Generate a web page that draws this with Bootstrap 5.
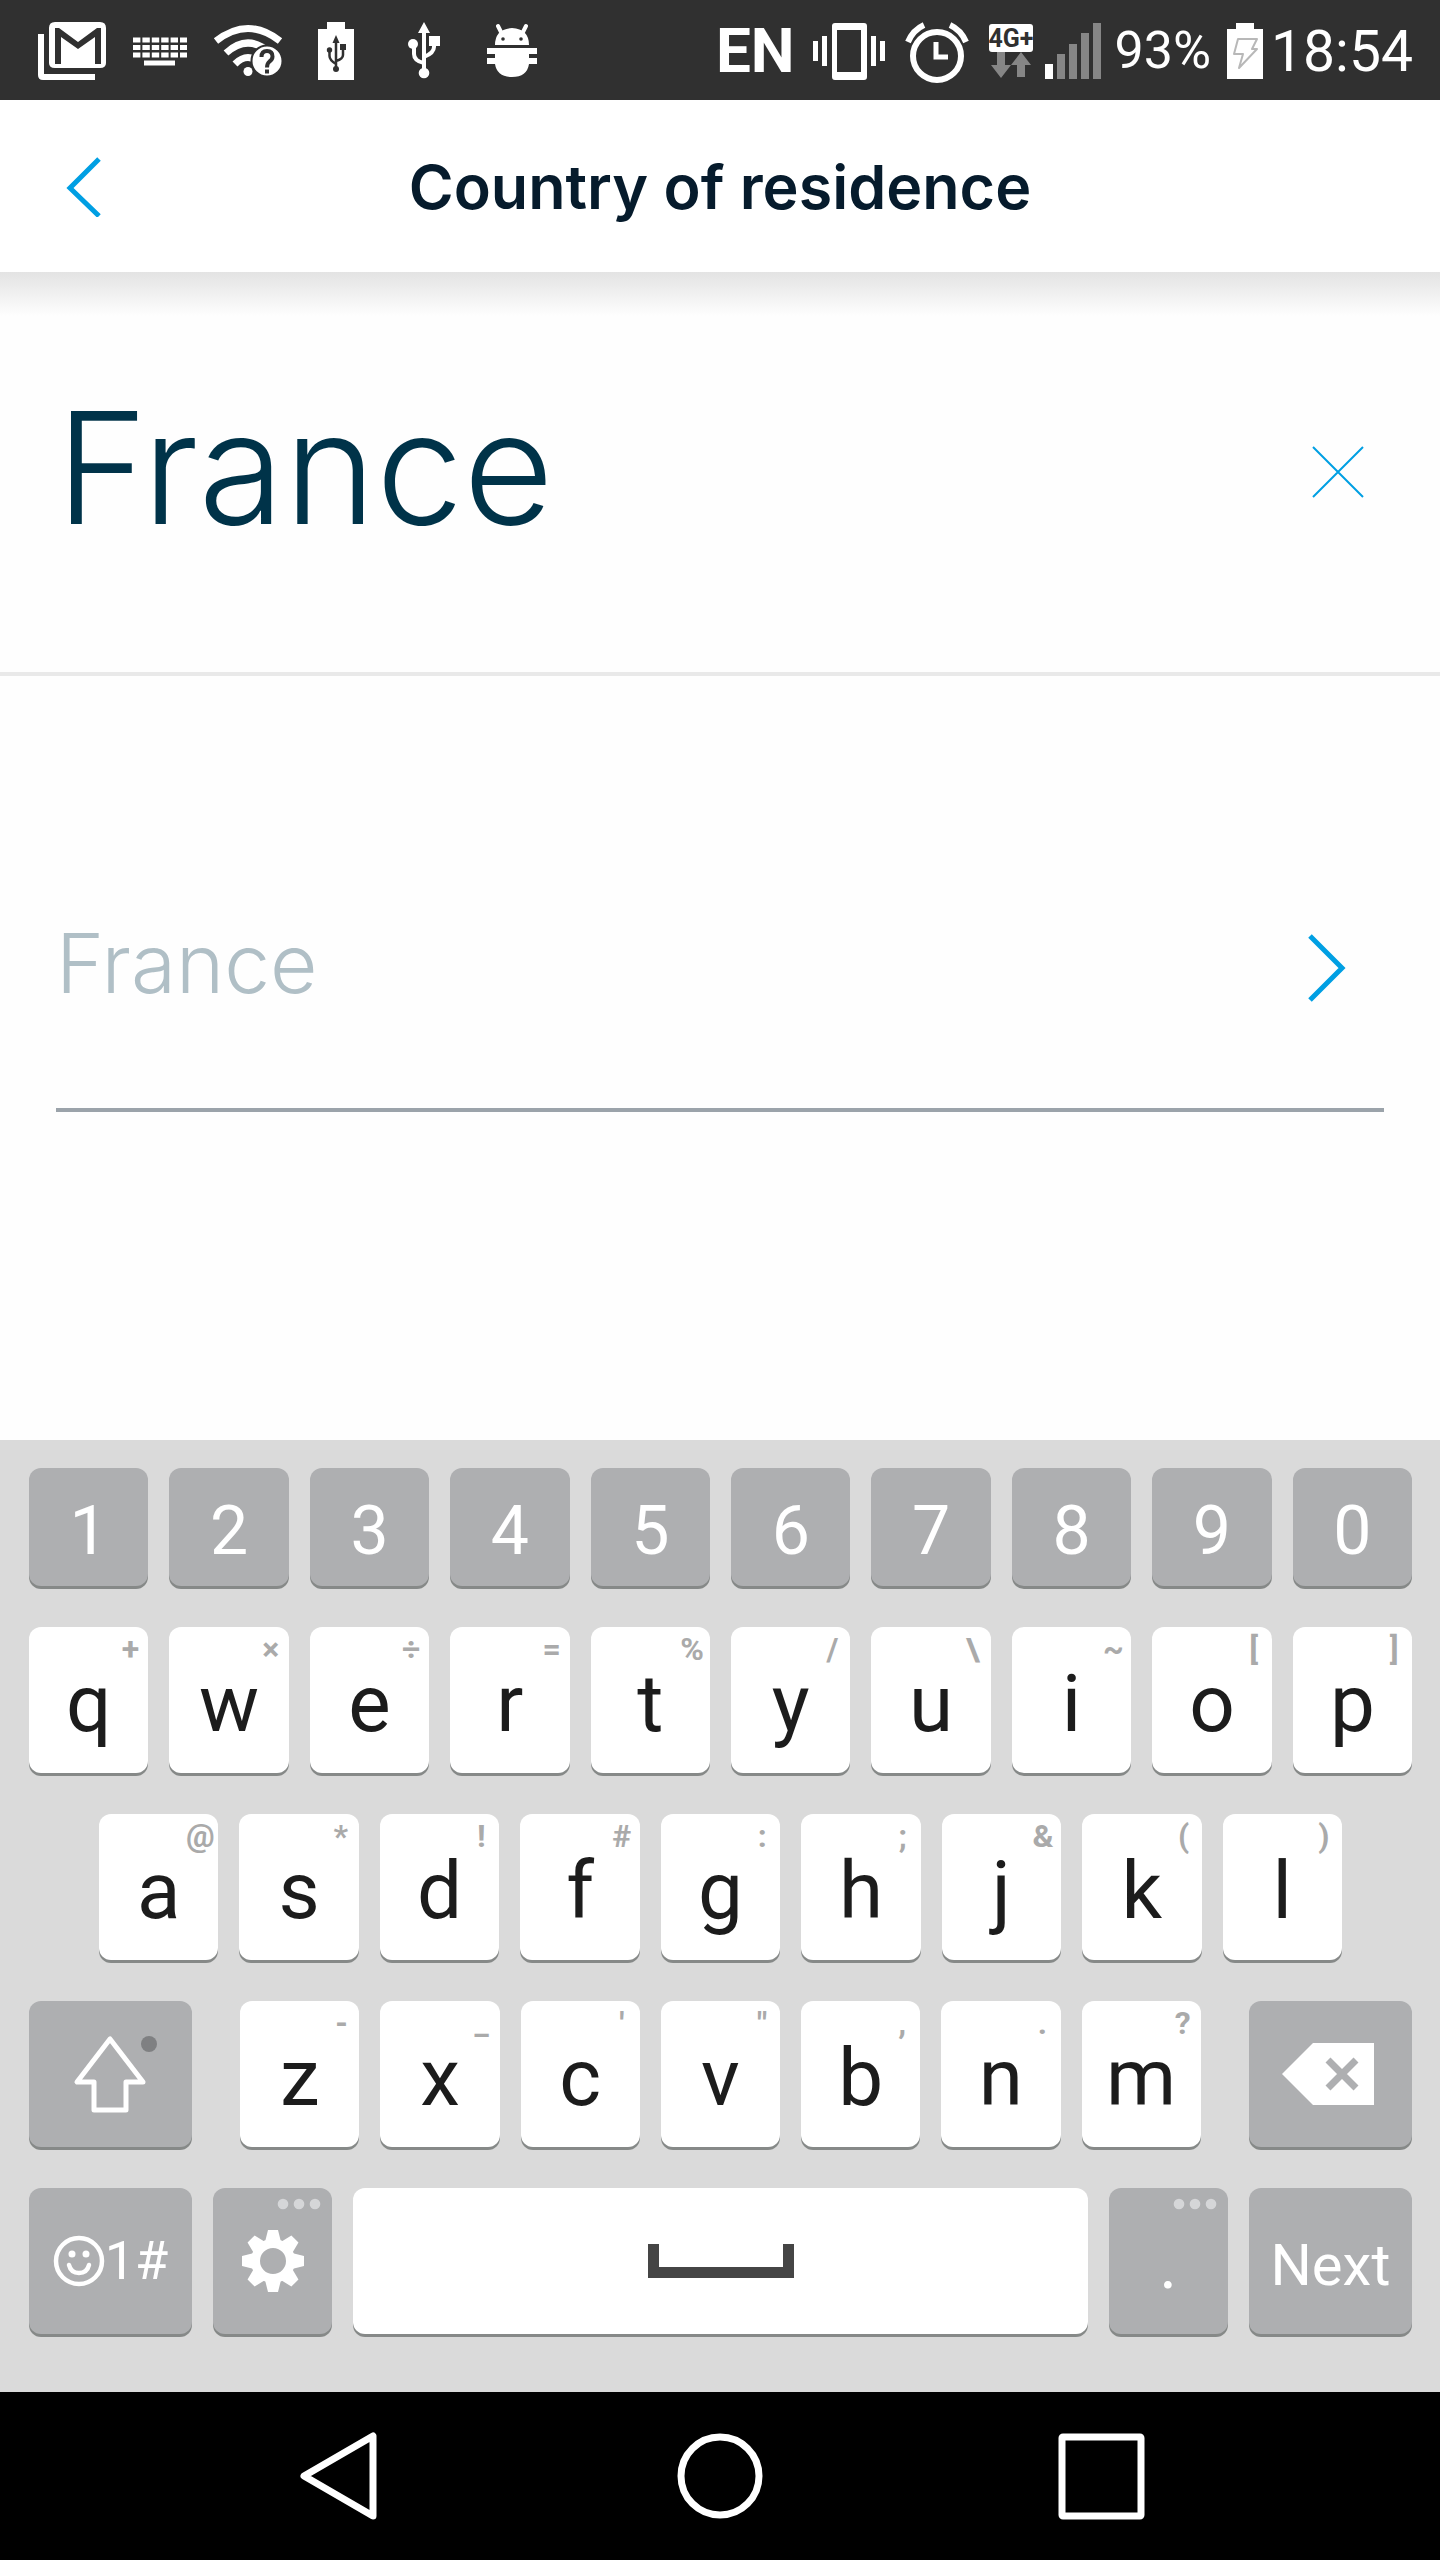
<!DOCTYPE html>
<html lang="en">
<head>
<meta charset="utf-8">
<meta name="viewport" content="width=device-width, initial-scale=1">
<title>Country of residence</title>
<link href="https://cdn.jsdelivr.net/npm/bootstrap@5.3.0/dist/css/bootstrap.min.css" rel="stylesheet">
<style>
  body { font-family: Roboto, "Noto Sans", sans-serif; background: #fefefe; }
  button { font-family: inherit; }
  svg { display: block; flex: none; }

  .status-bar { height: 100px; padding: 2px 27px 0 36px; background: #303030; color: #fff; line-height: 1; }
  .status-left { gap: 16px; }
  .status-right { gap: 8px; }
  .status-lang { font-size: 62px; font-weight: 700; }
  .status-pct { font-size: 52px; }
  .status-time { font-size: 57px; }

  .app-header { display: grid; grid-template-columns: 1fr auto 1fr; align-items: center; height: 172px; padding: 2px 56px 0; background: #fff; }
  .app-title { font-family: Inter, sans-serif; font-size: 61px; font-weight: 600; line-height: 80px; color: #061b2c; }
  .icon-btn { padding: 0; border: 0; background: none; }

  .search-area { height: 404px; padding: 0 56px; border-bottom: 4px solid #e9e9e9; background: linear-gradient(#e3e3e3, #fefefe 44px); }
  .search-box { min-width: 0; padding: 0 0 8px; border: 0; outline: 0; background: none; font-family: Inter, sans-serif; font-weight: 300; font-size: 156px; line-height: 208px; color: #003349; }

  .results { padding: 152px 56px 0; }
  .result-link { height: 284px; border-bottom: 4px solid #9ba3aa; color: #b0bfc6; text-decoration: none; font-family: Inter, sans-serif; font-weight: 300; font-size: 82px; line-height: 100px; }
  .result-link span { padding-bottom: 8px; }

  .keyboard { padding: 28px 28px 58px 29px; gap: 41px; background: #dadada; }
  .key-row { gap: 21px; }
  .key-row-inset { padding: 0 70px; }
  .key { position: relative; display: flex; align-items: center; justify-content: center; flex: 119 1 0; min-width: 0; height: 146px; padding: 8px 0 0; border: 0; border-radius: 12px; background: #fff; box-shadow: 0 3px 0 #868988; color: #1c1c1c; font-size: 80px; line-height: 1; }
  .key-num { height: 118px; font-size: 68px; }
  .key-gray { background: #aeafb1; color: #fff; }
  .key-wide { flex-grow: 163; font-size: 58px; }
  .key-shift { margin-right: 27px; }
  .key-back { margin-left: 27px; }
  .key-space { flex-grow: 734; }
  .key-dot { font-size: 68px; }
  .key-icon { padding-top: 0; }
  .key-symbols { font-size: 54px; }
  .key-hint { position: absolute; top: 0; right: 0; width: 36px; text-align: center; font-size: 32px; font-weight: 700; line-height: 44px; color: #aaa; }
  .key-more { position: absolute; top: 10px; right: 11px; }

  .nav-keys { height: 168px; gap: 293px; background: #000; }
</style>
</head>
<body class="d-flex flex-column min-vh-100">

<div class="status-bar d-flex align-items-center justify-content-between">
  <div class="status-left d-flex align-items-center">
    <svg width="72" height="60" viewBox="0 0 72 60" fill="#fff" aria-label="Mail"><path d="M2 13h6v40h51v6H7q-5 0-5-5z"/><path fill-rule="evenodd" d="M19 1h45q6 0 6 6v35q0 5-6 5H19q-6 0-6-5V7q0-6 6-6zM19 7v36h6V16l17 12 17-12v27h6V7h-4L42 21 23 7z"/></svg>
    <svg width="72" height="60" viewBox="0 0 72 60" aria-label="Keyboard"><path d="M9 19h54M9 26.500h54M9 34h54" stroke="#fff" stroke-width="5" stroke-dasharray="7.400 2"/><path d="M20 42h31" stroke="#fff" stroke-width="5"/></svg>
    <svg width="72" height="60" viewBox="0 0 72 60" aria-label="Wi-Fi"><g fill="none" stroke="#fff" stroke-width="7"><path d="M4 20Q36-5 68 20"/><path d="M14 32Q36 12 58 32"/><path d="M23 43Q36 30 49 43"/></g><circle cx="36" cy="50.500" r="4.500" fill="#fff"/><circle cx="55" cy="40" r="15.500" fill="#fff" stroke="#303030" stroke-width="2"/><path d="M49.500 36q0-6 5.500-6t5.500 5.500q0 3-3 5-2.500 2-2.500 6" fill="none" stroke="#303030" stroke-width="4"/><path d="M53 48.500h4v4h-4z" fill="#303030"/></svg>
    <svg width="72" height="60" viewBox="0 0 72 60" aria-label="USB charging"><path fill="#fff" d="M18 8h9V1h18v7h9v51H18z"/><g fill="none" stroke="#303030" stroke-width="2.500"><path d="M36 20v30M29.500 30v5q0 4 6.500 8M43 26v8q0 4-7 6"/></g><path fill="#303030" d="M36 14l3.500 8h-7zM40 23h6v6h-6z"/><circle cx="29.500" cy="29" r="2.700" fill="#303030"/><circle cx="36" cy="48" r="3" fill="#303030"/></svg>
    <svg width="72" height="60" viewBox="0 0 72 60" aria-label="USB"><g fill="none" stroke="#fff" stroke-width="4"><path d="M36 10v45M26 24v9q0 7 10 9M46 16v10q0 6-10 10"/></g><path fill="#fff" d="M36 1l6 11H30zM41 15h11v10H41z"/><circle cx="25" cy="23" r="5" fill="#fff"/><circle cx="36" cy="52" r="5.300" fill="#fff"/></svg>
    <svg width="72" height="60" viewBox="0 0 72 60" aria-label="Debugging"><path d="M22 5l4 8M50 5l-4 8" stroke="#fff" stroke-width="4" stroke-linecap="round"/><path fill="#fff" d="M19 24q0-16 17-17 17 1 17 17zM11 27h50v6h-8v4h8v6h-8q-2 13-17 13T19 43h-8v-6h8v-4h-8z"/><circle cx="27" cy="18" r="1.800" fill="#303030"/><circle cx="45" cy="18" r="1.800" fill="#303030"/></svg>
  </div>
  <div class="status-right d-flex align-items-center">
    <span class="status-lang me-2">EN</span>
    <svg width="84" height="60" viewBox="0 0 84 60" fill="#fff" aria-label="Vibrate"><path fill-rule="evenodd" d="M24 2h29q3 0 3 3v51q0 3-3 3H24q-3 0-3-3V5q0-3 3-3zM26 9v42h24V9zM2 20h5v20H2zM11 15h5v30h-5zM60 15h5v30h-5zM69 20h5v20h-5z"/></svg>
    <svg width="76" height="64" viewBox="0 0 76 64" fill="none" stroke="#fff" aria-label="Alarm"><circle cx="34" cy="37" r="24" stroke-width="6"/><path d="M33 23v15h12" stroke-width="5"/><path d="M5 23Q10 11 21 6M63 23Q58 11 47 6" stroke-width="6"/></svg>
    <svg width="46" height="60" viewBox="0 0 46 60" aria-label="4G+"><rect x="2" y="3" width="44" height="28" rx="3" fill="#fff"/><text x="24" y="26" text-anchor="middle" font-family="Roboto" font-weight="700" font-size="25" fill="#303030">4G+</text><path fill="#868686" d="M10 31h8v13h6L14 57 4 44h6zM34 31l10 13h-6v12h-8V44h-6z"/></svg>
    <svg width="66" height="60" viewBox="0 0 66 60" aria-label="Signal"><path fill="#fff" d="M4 43h8v15H4z"/><path fill="#868686" d="M16 33h8v25h-8zM28 23h8v35h-8zM40 12h8v46h-8zM52 2h8v56h-8z"/></svg>
    <span class="status-pct">93%</span>
    <svg width="44" height="60" viewBox="0 0 44 60" aria-label="Battery"><path fill="#fff" d="M8 8h9V2h18v6h9v50H8z"/><path fill="none" stroke="#b8b8b8" stroke-width="2" stroke-linejoin="round" d="M19 18h19l-5 10h5L20 47l4-14h-9z"/></svg>
    <span class="status-time">18:54</span>
  </div>
</div>

<header class="app-header">
  <button class="icon-btn text-start" type="button" aria-label="Back"><svg width="56" height="60" viewBox="0 0 56 60" fill="none" stroke="#009fe3" stroke-width="5"><path d="M43 2L14 31l29 28"/></svg></button>
  <h1 class="app-title m-0">Country of residence</h1>
</header>

<main class="flex-grow-1">
  <div class="search-area d-flex align-items-center">
    <input class="search-box flex-grow-1" type="text" value="France" aria-label="Country">
    <button class="icon-btn" type="button" aria-label="Clear"><svg width="92" height="52" viewBox="0 0 92 52" fill="none" stroke="#009fe3" stroke-width="2"><path d="M21 1l50 50M71 1L21 51"/></svg></button>
  </div>
  <div class="results">
    <a class="result-link d-flex align-items-center justify-content-between" href="#">
      <span>France</span>
      <svg width="80" height="68" viewBox="0 0 80 68" fill="none" stroke="#009fe3" stroke-width="5"><path d="M6 2l32 32L6 66"/></svg>
    </a>
  </div>
</main>

<section class="keyboard d-flex flex-column" aria-label="Keyboard">
  <div class="key-row d-flex">
    <button class="key key-num key-gray" type="button">1</button>
    <button class="key key-num key-gray" type="button">2</button>
    <button class="key key-num key-gray" type="button">3</button>
    <button class="key key-num key-gray" type="button">4</button>
    <button class="key key-num key-gray" type="button">5</button>
    <button class="key key-num key-gray" type="button">6</button>
    <button class="key key-num key-gray" type="button">7</button>
    <button class="key key-num key-gray" type="button">8</button>
    <button class="key key-num key-gray" type="button">9</button>
    <button class="key key-num key-gray" type="button">0</button>
  </div>
  <div class="key-row d-flex">
    <button class="key" type="button">q<span class="key-hint">+</span></button>
    <button class="key" type="button">w<span class="key-hint">×</span></button>
    <button class="key" type="button">e<span class="key-hint">÷</span></button>
    <button class="key" type="button">r<span class="key-hint">=</span></button>
    <button class="key" type="button">t<span class="key-hint">%</span></button>
    <button class="key" type="button">y<span class="key-hint">/</span></button>
    <button class="key" type="button">u<span class="key-hint">\</span></button>
    <button class="key" type="button">i<span class="key-hint">~</span></button>
    <button class="key" type="button">o<span class="key-hint">[</span></button>
    <button class="key" type="button">p<span class="key-hint">]</span></button>
  </div>
  <div class="key-row key-row-inset d-flex">
    <button class="key" type="button">a<span class="key-hint">@</span></button>
    <button class="key" type="button">s<span class="key-hint">*</span></button>
    <button class="key" type="button">d<span class="key-hint">!</span></button>
    <button class="key" type="button">f<span class="key-hint">#</span></button>
    <button class="key" type="button">g<span class="key-hint">:</span></button>
    <button class="key" type="button">h<span class="key-hint">;</span></button>
    <button class="key" type="button">j<span class="key-hint">&amp;</span></button>
    <button class="key" type="button">k<span class="key-hint">(</span></button>
    <button class="key" type="button">l<span class="key-hint">)</span></button>
  </div>
  <div class="key-row d-flex">
    <button class="key key-gray key-wide key-shift key-icon" type="button" aria-label="Shift"><svg width="92" height="80" viewBox="0 0 92 80"><path d="M45 5L12 48h17v28h32V48h17z" fill="none" stroke="#fff" stroke-width="5" stroke-linejoin="round"/><circle cx="84" cy="10" r="8" fill="#7f8082"/></svg></button>
    <button class="key" type="button">z<span class="key-hint">-</span></button>
    <button class="key" type="button">x<span class="key-hint">_</span></button>
    <button class="key" type="button">c<span class="key-hint">'</span></button>
    <button class="key" type="button">v<span class="key-hint">"</span></button>
    <button class="key" type="button">b<span class="key-hint">,</span></button>
    <button class="key" type="button">n<span class="key-hint">.</span></button>
    <button class="key" type="button">m<span class="key-hint">?</span></button>
    <button class="key key-gray key-wide key-back key-icon" type="button" aria-label="Backspace"><svg width="96" height="62" viewBox="0 0 96 62"><path d="M0 31L31 0h61v62H31z" fill="#fff"/><path d="M46 17l28 28M74 17L46 45" stroke="#aeafb1" stroke-width="7"/></svg></button>
  </div>
  <div class="key-row d-flex">
    <button class="key key-gray key-wide key-icon key-symbols" type="button" aria-label="Emoji and symbols"><svg width="52" height="52" viewBox="0 0 52 52" fill="none" stroke="#fff"><circle cx="26" cy="26" r="23" stroke-width="4.500"/><path d="M16 30q2 8 10 8t10-8" stroke-width="4.500" stroke-linecap="round"/><g fill="#fff" stroke="none"><circle cx="19" cy="19" r="3.500"/><circle cx="33" cy="19" r="3.500"/></g></svg><span>1#</span></button>
    <button class="key key-gray key-icon" type="button" aria-label="Settings"><svg width="64" height="64" viewBox="-32 -32 64 64"><g fill="#fff"><path id="tooth" d="M-8-19l3-12H5l3 12z"/><use href="#tooth" transform="rotate(45)"/><use href="#tooth" transform="rotate(90)"/><use href="#tooth" transform="rotate(135)"/><use href="#tooth" transform="rotate(180)"/><use href="#tooth" transform="rotate(225)"/><use href="#tooth" transform="rotate(270)"/><use href="#tooth" transform="rotate(315)"/></g><circle r="17.500" fill="none" stroke="#fff" stroke-width="9"/></svg><svg class="key-more" width="44" height="12" viewBox="0 0 44 12" fill="#d5d6d8"><circle cx="6" cy="6" r="5.300"/><circle cx="22" cy="6" r="5.300"/><circle cx="38" cy="6" r="5.300"/></svg></button>
    <button class="key key-space key-icon" type="button" aria-label="Space"><svg width="146" height="34" viewBox="0 0 146 34"><path d="M0 0h11v23h124V0h11v34H0z" fill="#454545"/></svg></button>
    <button class="key key-gray key-dot" type="button">.<svg class="key-more" width="44" height="12" viewBox="0 0 44 12" fill="#d5d6d8"><circle cx="6" cy="6" r="5.300"/><circle cx="22" cy="6" r="5.300"/><circle cx="38" cy="6" r="5.300"/></svg></button>
    <button class="key key-gray key-wide" type="button">Next</button>
  </div>
</section>

<nav class="nav-keys d-flex align-items-center justify-content-center" aria-label="System">
  <button class="icon-btn" type="button" aria-label="Back"><svg width="88" height="88" viewBox="0 0 88 88" fill="none" stroke="#fff" stroke-width="7" stroke-linejoin="round"><path d="M9 44L78 4v80z"/></svg></button>
  <button class="icon-btn" type="button" aria-label="Home"><svg width="88" height="88" viewBox="0 0 88 88" fill="none" stroke="#fff" stroke-width="7"><circle cx="44" cy="44" r="39"/></svg></button>
  <button class="icon-btn" type="button" aria-label="Recent apps"><svg width="88" height="88" viewBox="0 0 88 88" fill="none" stroke="#fff" stroke-width="7"><rect x="5" y="5" width="79" height="79" rx="1"/></svg></button>
</nav>

<script src="https://cdn.jsdelivr.net/npm/bootstrap@5.3.0/dist/js/bootstrap.bundle.min.js"></script>
</body>
</html>
